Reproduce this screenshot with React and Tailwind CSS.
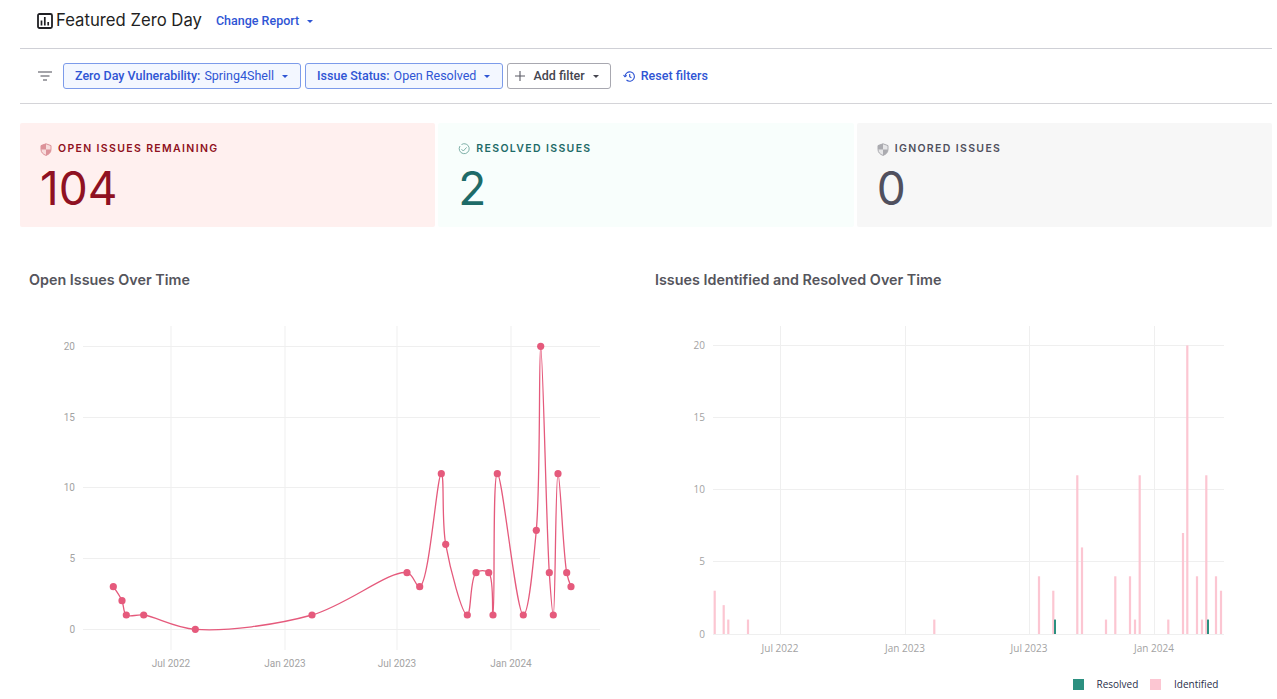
const linePts = [
  [113.3, 586.7], [122, 600.7], [126.3, 615], [143.7, 615], [195.3, 629.3], [312, 615],
  [407, 572.7], [419.7, 586.7], [441.3, 473.7], [445.7, 544.3], [467.3, 615], [476, 572.7],
  [488.7, 572.7], [493, 615], [497.3, 473.7], [523.3, 615], [536.3, 530.3], [540.7, 346.3],
  [549.3, 572.7], [553.3, 615], [558, 473.7], [566.7, 572.7], [571, 586.7],
]

const identified = [
  [714.7, 3], [723.7, 2], [728.3, 1], [748, 1], [934.3, 1], [1039, 4], [1053.3, 3], [1077.3, 11],
  [1082, 6], [1106, 1], [1115.3, 4], [1130, 4], [1135, 1], [1139.7, 11], [1168.3, 1], [1183, 7],
  [1187.3, 20], [1197, 4], [1202, 1], [1206.3, 11], [1216, 4], [1221, 3],
]

const resolved = [[1055, 1], [1208, 1]]

// same tangent maths plotly uses for spline lines
function tangent(a, b, c) {
  const d1x = a[0] - b[0]
  const d1y = a[1] - b[1]
  const d2x = c[0] - b[0]
  const d2y = c[1] - b[1]
  const d1a = Math.pow(d1x * d1x + d1y * d1y, 0.25)
  const d2a = Math.pow(d2x * d2x + d2y * d2y, 0.25)
  const numx = d2a * d2a * d1x - d1a * d1a * d2x
  const numy = d2a * d2a * d1y - d1a * d1a * d2y
  const den1 = 3 * d2a * (d1a + d2a)
  const den2 = 3 * d1a * (d1a + d2a)
  return [
    [b[0] + numx / den1, b[1] + numy / den1],
    [b[0] - numx / den2, b[1] - numy / den2],
  ]
}

function splinePath(pts) {
  const t = []
  for (let i = 1; i < pts.length - 1; i++) t.push(tangent(pts[i - 1], pts[i], pts[i + 1]))
  let d = `M${pts[0]} Q${t[0][0]} ${pts[1]}`
  for (let i = 2; i < pts.length - 1; i++) d += ` C${t[i - 2][1]} ${t[i - 1][0]} ${pts[i]}`
  d += ` Q${t[t.length - 1][1]} ${pts[pts.length - 1]}`
  return d
}

const Caret = ({ className }) => (
  <svg width="6" height="3" viewBox="0 0 6 3" className={className}>
    <path d="M0 0h6L3 3z" fill="currentColor" />
  </svg>
)

const ShieldIcon = ({ light, dark }) => (
  <svg width="12" height="13" viewBox="0 0 12 13" className="shrink-0">
    <path d="M6 .8 11 2.6v3.800c0 3-2.100 5-5 6-2.900-1-5-3-5-6V2.600z" fill={light} stroke={dark} strokeWidth="1" />
    <path d="M6 .8V6.400H1V2.600zM6 6.400h5c0 3-2.100 5-5 6z" fill={dark} />
  </svg>
)

const CheckIcon = () => (
  <svg width="12" height="12" viewBox="0 0 12 12" fill="none" stroke="#7fb0a8" strokeWidth="1" className="shrink-0">
    <path d="M3.500 1.500A5 5 0 1 1 2 3" />
    <path d="M3.500 6.200 5.300 8 8.600 4.400" />
  </svg>
)

const FilterChip = ({ label, value }) => (
  <button type="button" className="h-[26px] flex items-center rounded-[3px] border border-[#7c9bea] bg-[#f3f7ff] pl-[11px] pr-3 text-[12.5px] text-[#2f55d4]">
    <span className="font-medium">{label}:</span>
    <span className="ml-1">{value}</span>
    <Caret className="ml-2" />
  </button>
)

const StatCard = ({ bg, color, icon, label, value }) => (
  <div className={`h-[104px] rounded-[2px] pl-5 pt-[18px] ${bg}`}>
    <div className="flex items-center gap-[6px] h-4">
      {icon}
      <span className={`text-[10.5px] font-semibold tracking-[1.35px] ${color}`}>{label}</span>
    </div>
    <div className={`mt-1 text-[46px] leading-[54px] ${color}`}>{value}</div>
  </div>
)

const OpenIssuesChart = () => (
  <svg width="600" height="370" viewBox="20 320 600 370" className="block mt-[31px]" fontFamily="Roboto, sans-serif" fontSize="10" fill="#a3a3a3">
    {[171, 285, 397, 511].map(x => (
      <line key={x} x1={x} x2={x} y1="326" y2="650" stroke="#efefef" />
    ))}
    {[[20, 346.5], [15, 417.5], [10, 487.5], [5, 558.5], [0, 629.5]].map(([v, y]) => (
      <g key={v}>
        <line x1="83" x2="600" y1={y} y2={y} stroke="#efefef" />
        <text x="75" y={y + 3.5} textAnchor="end">{v}</text>
      </g>
    ))}
    {[[171, 'Jul 2022'], [285, 'Jan 2023'], [397, 'Jul 2023'], [511, 'Jan 2024']].map(([x, t]) => (
      <text key={t} x={x} y="667" textAnchor="middle">{t}</text>
    ))}
    <path d={splinePath(linePts)} fill="none" stroke="#e55a7c" strokeWidth="1.3" />
    {linePts.map(([x, y]) => (
      <circle key={`${x}-${y}`} cx={x} cy={y} r="3.6" fill="#e55a7c" />
    ))}
  </svg>
)

const IdentifiedChart = () => (
  <svg width="622" height="370" viewBox="650 320 622 370" className="block mt-[31px]" fontFamily="'Open Sans', sans-serif" fontSize="10" fill="#a3a3a3">
    {[780.5, 905.5, 1029.5, 1154.5].map(x => (
      <line key={x} x1={x} x2={x} y1="326" y2="634" stroke="#efefef" />
    ))}
    {[[20, 345.5], [15, 417.5], [10, 489.5], [5, 561.5], [0, 634.5]].map(([v, y]) => (
      <g key={v}>
        <line x1="713" x2="1224" y1={y} y2={y} stroke="#efefef" />
        <text x="705" y={y + 3.5} textAnchor="end">{v}</text>
      </g>
    ))}
    {[[780, 'Jul 2022'], [905, 'Jan 2023'], [1029, 'Jul 2023'], [1154, 'Jan 2024']].map(([x, t]) => (
      <text key={t} x={x} y="652" textAnchor="middle">{t}</text>
    ))}
    {identified.map(([x, v]) => (
      <rect key={x} x={x - 1.1} width="2.2" y={634 - v * 14.43} height={v * 14.43} fill="#fcc6d2" />
    ))}
    {resolved.map(([x, v]) => (
      <rect key={x} x={x - 1} width="2" y={634 - v * 14.43} height={v * 14.43} fill="#2c9080" />
    ))}
    <rect x="1073" y="679" width="11" height="11" fill="#2c9080" />
    <text x="1096.5" y="688" fill="#2a2f4a">Resolved</text>
    <rect x="1150" y="679" width="11" height="11" fill="#fcc6d2" />
    <text x="1174" y="688" fill="#2a2f4a">Identified</text>
  </svg>
)

const App = () => {
  return (
    <div className="w-[1277px] h-[699px] overflow-hidden bg-white pl-5 font-['Roboto',sans-serif]">
      <div className="w-[1252px]">
        <header className="h-[49px] border-b border-[#cfd0d6] flex items-center pb-[6px] pl-[17px]">
          <svg width="16" height="16" viewBox="0 0 16 16" fill="none" className="shrink-0">
            <rect x="1" y="1" width="14" height="14" rx="1.5" stroke="#1f1f23" strokeWidth="1.8" />
            <path d="M4.5 7.5v5M7.8 4v8.500M11.200 9v3.500" stroke="#1f1f23" strokeWidth="1.7" />
          </svg>
          <h1 className="ml-[3px] text-[16.7px] text-[#1f1f23] font-['Inter',sans-serif]">Featured Zero Day</h1>
          <button type="button" className="ml-[14px] flex items-center text-[12.5px] font-medium text-[#2f55d4]">
            Change Report
            <Caret className="ml-2" />
          </button>
        </header>
        <div className="h-[55px] border-b border-[#d4d4d8] flex items-center pl-[18px]">
          <svg width="14" height="10" viewBox="0 0 14 10" fill="none" stroke="#4b4b55" strokeWidth="1.2" className="shrink-0">
            <path d="M0 1h14M2.5 5h9M5 9h4" />
          </svg>
          <div className="ml-[11px] flex items-center gap-1">
            <FilterChip label="Zero Day Vulnerability" value="Spring4Shell" />
            <FilterChip label="Issue Status" value="Open Resolved" />
            <button type="button" className="h-[26px] flex items-center rounded-[3px] border border-[#a8a8b0] pl-[7px] pr-[11px] text-[12.5px] font-medium text-[#45454f]">
              <svg width="10" height="10" viewBox="0 0 10 10" stroke="#5a5a64" strokeWidth="1.1">
                <path d="M5 0v10M0 5h10" />
              </svg>
              <span className="ml-2">Add filter</span>
              <Caret className="ml-2" />
            </button>
          </div>
          <button type="button" className="ml-3 flex items-center text-[12.5px] font-medium text-[#2f55d4]">
            <svg width="13" height="13" viewBox="0 0 13 13" fill="none" stroke="#2f55d4" strokeWidth="1.1">
              <path d="M2 6.5a4.7 4.7 0 1 1 1.5 3.5" />
              <path d="M.5 5 2 6.800 3.800 5.400" />
              <path d="M6.700 4v2.700l1.700 1" />
            </svg>
            <span className="ml-[5px]">Reset filters</span>
          </button>
        </div>
        <section className="mt-[19px] grid grid-cols-3 gap-[3px] font-['Inter',sans-serif]">
          <StatCard bg="bg-[#fff0ef]" color="text-[#8f1122]" icon={<ShieldIcon light="#f7dcdc" dark="#dc9299" />} label="OPEN ISSUES REMAINING" value="104" />
          <StatCard bg="bg-[#f8fefc]" color="text-[#1e6b68]" icon={<CheckIcon />} label="RESOLVED ISSUES" value="2" />
          <StatCard bg="bg-[#f7f7f7]" color="text-[#50505e]" icon={<ShieldIcon light="#e6e6e8" dark="#ababb0" />} label="IGNORED ISSUES" value="0" />
        </section>
        <section className="mt-[44px] flex">
          <div className="w-[630px]">
            <h2 className="pl-[9px] text-[14.35px] leading-[18px] font-semibold text-[#55555c] font-['Inter',sans-serif]">Open Issues Over Time</h2>
            <OpenIssuesChart />
          </div>
          <div className="w-[622px]">
            <h2 className="pl-[5px] text-[14.35px] leading-[18px] font-semibold text-[#55555c] font-['Inter',sans-serif]">Issues Identified and Resolved Over Time</h2>
            <IdentifiedChart />
          </div>
        </section>
      </div>
    </div>
  )
}

export default App
